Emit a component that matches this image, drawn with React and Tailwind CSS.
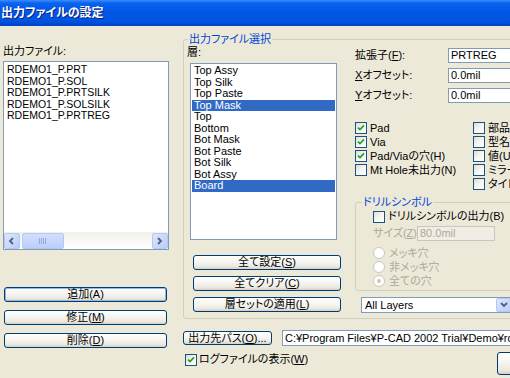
import React from 'react';

// Win XP style "output file settings" dialog

const files = ['RDEMO1_P.PRT', 'RDEMO1_P.SOL', 'RDEMO1_P.PRTSILK', 'RDEMO1_P.SOLSILK', 'RDEMO1_P.PRTREG'];

const layers = [
  { name: 'Top Assy' },
  { name: 'Top Silk' },
  { name: 'Top Paste' },
  { name: 'Top Mask', selected: true },
  { name: 'Top' },
  { name: 'Bottom' },
  { name: 'Bot Mask' },
  { name: 'Bot Paste' },
  { name: 'Bot Silk' },
  { name: 'Bot Assy' },
  { name: 'Board', selected: true },
];

function Check({ checked, disabled }) {
  return (
    <span
      className={
        disabled
          ? 'flex h-[12px] w-[12px] shrink-0 items-center justify-center border border-[#cac8bb] bg-white'
          : 'flex h-[12px] w-[12px] shrink-0 items-center justify-center border border-[#1c5180] bg-[linear-gradient(135deg,#dcdcd7_0%,#f5f5f2_50%,#ffffff_100%)]'
      }
    >
      {checked && (
        <svg width="8" height="8" viewBox="0 0 8 8">
          <path d="M1 3.6 L3 5.6 L7 1.4" fill="none" stroke="#21a121" strokeWidth="1.7" />
        </svg>
      )}
    </span>
  );
}

function Radio({ checked }) {
  return (
    <span className="flex h-[12px] w-[12px] shrink-0 items-center justify-center rounded-full border border-[#cac8bb] bg-white">
      {checked && <span className="h-[4px] w-[4px] rounded-full bg-[#cac8bb]" />}
    </span>
  );
}

function CheckRow({ checked, children }) {
  return (
    <div className="flex h-[14px] items-center gap-[3px] whitespace-nowrap">
      <Check checked={checked} />
      <span>{children}</span>
    </div>
  );
}

function Btn({ children, className = '' }) {
  return (
    <button
      className={`flex items-center justify-center whitespace-nowrap rounded-[3px] border border-[#003c74] bg-[linear-gradient(180deg,#ffffff_0%,#f6f5f1_45%,#ebe9e1_80%,#d6d0c5_100%)] leading-none text-black ${className}`}
    >
      {children}
    </button>
  );
}

function Chevron({ dir }) {
  const d = dir === 'left' ? 'M5 1 L2 4 L5 7' : dir === 'right' ? 'M2 1 L5 4 L2 7' : 'M1 2 L4 5 L7 2';
  return (
    <svg width="8" height="8" viewBox="0 0 8 8">
      <path d={d} fill="none" stroke="#4d6185" strokeWidth="1.8" />
    </svg>
  );
}

export default function App() {
  return (
    <div className="h-[378px] w-[510px] overflow-hidden bg-[#ece9d8] font-['Liberation_Sans','Noto_Sans_CJK_JP',sans-serif] text-[11px] text-black [font-feature-settings:'palt']">
      {/* title bar */}
      <div className="flex h-[26px] items-center bg-[linear-gradient(180deg,#3a8efc_0%,#0a62f0_12%,#0057e6_45%,#0054e2_80%,#0042c4_100%)] pl-[1px] text-[12px] font-bold text-white [text-shadow:1px_1px_0_#0a1f80]">
        出力ファイルの設定
      </div>

      <div className="flex">
        {/* left column */}
        <div className="w-[183px] shrink-0 pl-[3px] pt-[19px]">
          <div className="h-[13px] leading-[13px]">出力ファイル:</div>
          <div className="mt-[3px] flex h-[189px] w-[166px] flex-col border border-[#7f9db9] bg-white">
            <div className="flex-1 pl-[3px] pt-[2px] text-[10.5px] leading-[11.55px]">
              {files.map(f => (
                <div key={f} className="whitespace-nowrap">{f}</div>
              ))}
            </div>
            <div className="flex h-[17px] items-center bg-[linear-gradient(180deg,#f3f1ec_0%,#fefefb_100%)]">
              <span className="flex h-[16px] w-[16px] items-center justify-center rounded-[2px] border border-[#b4c8f6] bg-[linear-gradient(135deg,#dde7fd_0%,#b9ccf8_100%)]">
                <Chevron dir="left" />
              </span>
              <span className="ml-[2px] flex h-[16px] w-[42px] items-center justify-center rounded-[2px] border border-[#b4c8f6] bg-[linear-gradient(180deg,#d3defc_0%,#bccefa_100%)]">
                <svg width="8" height="6" viewBox="0 0 8 6">
                  <path d="M0.5 0 V6 M2.5 0 V6 M4.5 0 V6 M6.5 0 V6" stroke="#8ea6e6" strokeWidth="1" />
                </svg>
              </span>
              <span className="flex-1" />
              <span className="flex h-[16px] w-[16px] items-center justify-center rounded-[2px] border border-[#b4c8f6] bg-[linear-gradient(135deg,#dde7fd_0%,#b9ccf8_100%)]">
                <Chevron dir="right" />
              </span>
            </div>
          </div>

          <div className="ml-[1px] mt-[37px] flex w-[163px] flex-col gap-[8px]">
            <Btn className="h-[15px] shadow-[inset_0_0_0_1px_#97b7e8]">追加(A)</Btn>
            <Btn className="h-[15px]">修正(<span className="underline">M</span>)</Btn>
            <Btn className="h-[15px]">削除(<span className="underline">D</span>)</Btn>
          </div>
        </div>

        {/* right area */}
        <div className="w-[389px] shrink-0 pt-[7px]">
          <fieldset className="h-[286px] rounded-[3px] border border-[#d0d0bf]">
            <legend className="ml-[4px] px-[1px] leading-[13px] text-[#0046d5]">出力ファイル選択</legend>
            <div className="flex">
              {/* layer list + buttons */}
              <div className="w-[171px] shrink-0 pl-[3px]">
                <div className="h-[13px] leading-[13px]">層:</div>
                <div className="ml-[3px] mt-[4px] h-[177px] w-[147px] border border-[#7f9db9] bg-white px-[1px] pt-[1px] leading-[11.55px]">
                  {layers.map(l => (
                    <div
                      key={l.name}
                      className={l.selected ? 'bg-[#316ac5] pl-[2px] text-white' : 'pl-[2px]'}
                    >
                      {l.name}
                    </div>
                  ))}
                </div>
                <div className="ml-[6px] mt-[15px] flex w-[148px] flex-col gap-[6px]">
                  <Btn className="h-[15px]">全て設定(<span className="underline">S</span>)</Btn>
                  <Btn className="h-[15px]">全てクリア(<span className="underline">C</span>)</Btn>
                  <Btn className="h-[15px]">層セットの適用(<span className="underline">L</span>)</Btn>
                </div>
              </div>

              {/* options */}
              <div className="flex-1">
                <div className="mt-[2px] flex flex-col gap-[5px]">
                  <div className="flex h-[15px] items-center">
                    <span className="w-[93px] whitespace-nowrap">拡張子(<span className="underline">F</span>):</span>
                    <span className="flex h-[15px] w-[110px] items-center border border-[#7f9db9] bg-white pl-[2px]">PRTREG</span>
                  </div>
                  <div className="flex h-[15px] items-center">
                    <span className="w-[93px] whitespace-nowrap"><span className="underline">X</span>オフセット:</span>
                    <span className="flex h-[15px] w-[110px] items-center border border-[#7f9db9] bg-white pl-[2px]">0.0mil</span>
                  </div>
                  <div className="flex h-[15px] items-center">
                    <span className="w-[93px] whitespace-nowrap"><span className="underline">Y</span>オフセット:</span>
                    <span className="flex h-[15px] w-[110px] items-center border border-[#7f9db9] bg-white pl-[2px]">0.0mil</span>
                  </div>
                </div>

                <div className="mt-[18px] flex">
                  <div className="w-[118px] shrink-0">
                    <CheckRow checked>Pad</CheckRow>
                    <CheckRow checked>Via</CheckRow>
                    <CheckRow checked>Pad/Viaの穴(H)</CheckRow>
                    <CheckRow>Mt Hole未出力(N)</CheckRow>
                  </div>
                  <div>
                    <CheckRow>部品番号(R)</CheckRow>
                    <CheckRow>型名(T)</CheckRow>
                    <CheckRow>値(U)</CheckRow>
                    <CheckRow>ミラー(I)</CheckRow>
                    <CheckRow>タイトル(K)</CheckRow>
                  </div>
                </div>

                <fieldset className="mt-[5px] h-[95px] w-[170px] rounded-[3px] border border-[#d0d0bf]">
                  <legend className="ml-[6px] px-[1px] leading-[13px] text-[#0046d5]">ドリルシンボル</legend>
                  <div className="pl-[17px]">
                    <div className="mt-[1px] flex h-[13px] items-center gap-[3px] whitespace-nowrap">
                      <Check />
                      <span>ドリルシンボルの出力(B)</span>
                    </div>
                    <div className="mt-[3px] flex h-[15px] items-center text-[#aca899]">
                      <span className="w-[44px] whitespace-nowrap">サイズ(<span className="underline">Z</span>):</span>
                      <span className="flex h-[15px] w-[78px] items-center border border-[#c9c7ba] bg-[#f0eee4] pl-[2px]">
                        80.0mil
                      </span>
                    </div>
                    <div className="mt-[5px] text-[#aca899]">
                      <div className="flex h-[14px] items-center gap-[4px]">
                        <Radio />
                        <span>メッキ穴</span>
                      </div>
                      <div className="flex h-[14px] items-center gap-[4px]">
                        <Radio />
                        <span>非メッキ穴</span>
                      </div>
                      <div className="flex h-[14px] items-center gap-[4px]">
                        <Radio checked />
                        <span>全ての穴</span>
                      </div>
                    </div>
                  </div>
                </fieldset>

                <div className="ml-[6px] mt-[6px] flex h-[16px] w-[152px] items-center border border-[#7f9db9] bg-white">
                  <span className="flex-1 pl-[3px]">All Layers</span>
                  <span className="flex h-[14px] w-[16px] items-center justify-center rounded-[2px] border border-[#b4c8f6] bg-[linear-gradient(135deg,#dde7fd_0%,#b9ccf8_100%)]">
                    <Chevron dir="down" />
                  </span>
                </div>
              </div>
            </div>
          </fieldset>

          <div className="mt-[11px] flex h-[16px] items-center">
            <Btn className="h-[14px] w-[89px]">出力先パス(<span className="underline">O</span>)...</Btn>
            <span className="ml-[10px] flex h-[16px] flex-1 items-center whitespace-nowrap border border-[#7f9db9] bg-white pl-[2px]">
              C:¥Program Files¥P-CAD 2002 Trial¥Demo¥rdemo1.pcb
            </span>
          </div>

          <div className="mt-[6px] flex items-start">
            <div className="ml-[2px] mt-[1px] flex h-[13px] items-center gap-[2px] whitespace-nowrap">
              <Check checked />
              <span>ログファイルの表示(<span className="underline">W</span>)</span>
            </div>
            <Btn className="ml-auto h-[23px] w-[75px]">OK</Btn>
          </div>
        </div>
      </div>
    </div>
  );
}
